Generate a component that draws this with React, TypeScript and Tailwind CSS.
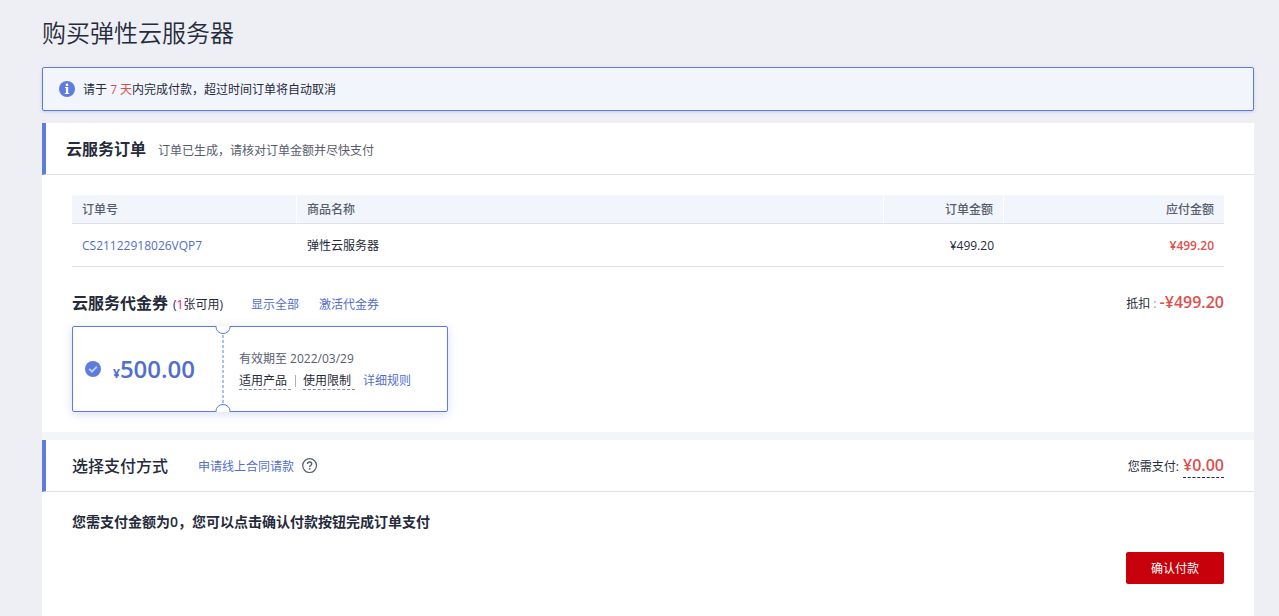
import type { ReactNode } from "react";

function InfoIcon() {
  return (
    <svg className="size-4 shrink-0" viewBox="0 0 16 16" aria-hidden="true">
      <circle cx="8" cy="8" r="8" fill="#5e7ce0" />
      <rect x="6.8" y="2.6" width="2.4" height="2.4" fill="#fff" />
      <path d="M6 6h3.2v6h1V13H5.8v-1h1.1V7H6z" fill="#fff" />
    </svg>
  );
}

function CheckIcon() {
  return (
    <svg className="size-4 shrink-0" viewBox="0 0 16 16" aria-hidden="true">
      <circle cx="8" cy="8" r="8" fill="#5e7ce0" />
      <path d="M4.2 7.8 7 10.6l4.8-4.9" fill="none" stroke="#c3d0f7" strokeWidth="1.8" />
    </svg>
  );
}

function HelpIcon() {
  return (
    <svg className="size-4" viewBox="0 0 16 16" fill="none" stroke="#575d6c" aria-hidden="true">
      <circle cx="7.6" cy="7.6" r="6.9" strokeWidth="1.2" />
      <path d="M5.5 6.1c0-1.4 1-2.1 2.1-2.1s2.1.8 2.1 2c0 1.4-2.1 1.5-2.1 3" strokeWidth="1.4" />
      <path d="M7.6 10v1.6" strokeWidth="1.5" />
    </svg>
  );
}

function Link({ children }: { children: ReactNode }) {
  return (
    <a href="#" className="text-[#526ecc] hover:underline">
      {children}
    </a>
  );
}

function Voucher() {
  return (
    <label className="relative flex h-[86px] w-[376px] cursor-pointer rounded-xs border border-[#5e7ce0] bg-white shadow-[0_2px_10px_rgba(94,124,224,0.25)]">
      <input type="checkbox" defaultChecked className="sr-only" aria-label="代金券 ¥500.00" />
      <span className="flex w-[149px] items-center pl-3 text-[#526ecc]">
        <CheckIcon />
        <span className="flex items-baseline pl-3 font-bold">
          <span className="text-xs">¥</span>
          <span className="text-2xl font-semibold">500.00</span>
        </span>
      </span>
      <span className="my-2 w-0.5 bg-[repeating-linear-gradient(to_bottom,#adc0f5_0_3px,transparent_3px_5px)]" />
      <svg className="absolute -top-px left-[142px] h-2 w-4" viewBox="0 0 16 8" aria-hidden="true">
        <path d="M1 0h14v1a7 6.5 0 0 1-14 0z" fill="#fff" />
        <path d="M1 0v1a7 6.5 0 0 0 14 0V0" fill="none" stroke="#5e7ce0" />
      </svg>
      <svg className="absolute -bottom-px left-[142px] h-2 w-4" viewBox="0 0 16 8" aria-hidden="true">
        <path d="M1 8h14V7A7 6.5 0 0 0 1 7z" fill="#fff" />
        <path d="M1 8V7a7 6.5 0 0 1 14 0v1" fill="none" stroke="#5e7ce0" />
      </svg>
      <span className="flex flex-col justify-center gap-1.5 pl-[15px] pt-0.5">
        <span className="leading-4 text-[#575d6c]">有效期至 2022/03/29</span>
        <span className="flex items-center text-[#252b3a]">
          <span className="border-b border-dashed border-[#8a8e99] pr-1 leading-4">适用产品</span>
          <span className="mx-1 h-3 border-l border-[#adb0b8]" />
          <span className="ml-[3px] mr-2 border-b border-dashed border-[#8a8e99] pr-1 leading-4">使用限制</span>
          <Link>详细规则</Link>
        </span>
      </span>
    </label>
  );
}

export default function App() {
  return (
    <div className="flex min-h-screen flex-col bg-[#eeeff5] pl-[42px] pr-[25px] font-['Open_Sans','Noto_Sans_CJK_SC',sans-serif] text-xs text-[#252b3a]">
      <h1 className="pb-[17px] pt-[15px] text-2xl font-[350] leading-[35px]">购买弹性云服务器</h1>

      <div
        role="status"
        className="flex h-11 items-center gap-2 rounded-xs border border-[#5e7ce0] bg-[#f2f5fc] px-4 shadow-[0_1px_3px_rgba(94,124,224,0.3)]"
      >
        <InfoIcon />
        <p className="pt-0.5">
          请于 <span className="text-[#de504e]">7 天</span>内完成付款，超过时间订单将自动取消
        </p>
      </div>

      <main className="mt-3 flex grow flex-col bg-white">
        <section>
          <header className="flex h-[52px] items-center gap-3 border-b border-l-4 border-b-[#dfe1e6] border-l-[#5e7ce0] pl-5">
            <h2 className="text-base font-bold">云服务订单</h2>
            <p className="pt-1 text-[#575d6c]">订单已生成，请核对订单金额并尽快支付</p>
          </header>

          <div className="px-[30px] pb-5 pt-5">
            <table className="w-full table-fixed border-separate border-spacing-0">
              <colgroup>
                <col className="w-[225px]" />
                <col />
                <col className="w-[120px]" />
                <col className="w-[220px]" />
              </colgroup>
              <thead>
                <tr className="h-[29px] bg-[#f2f5fc] text-[#575d6c] [&>th]:border-b [&>th]:border-b-[#dfe1e6] [&>th]:pt-0.5 [&>th]:font-medium">
                  <th className="border-r border-r-white px-2.5 text-left">订单号</th>
                  <th className="border-r border-r-white px-2.5 text-left">商品名称</th>
                  <th className="border-r border-r-white px-2.5 text-right">订单金额</th>
                  <th className="px-2.5 text-right">应付金额</th>
                </tr>
              </thead>
              <tbody>
                <tr className="h-[43px] [&>td]:border-b [&>td]:border-[#dfe1e6] [&>td]:pt-0.5">
                  <td className="px-2.5">
                    <Link>CS21122918026VQP7</Link>
                  </td>
                  <td className="px-2.5">弹性云服务器</td>
                  <td className="px-2.5 text-right">¥499.20</td>
                  <td className="px-2.5 text-right font-semibold text-[#de504e]">¥499.20</td>
                </tr>
              </tbody>
            </table>

            <div className="flex items-center justify-between pb-[11px] pt-6">
              <div className="flex items-baseline">
                <h3 className="text-base font-bold">云服务代金券</h3>
                <span className="pl-[5px]">
                  (<span className="text-[#f3007e]">1</span>张可用)
                </span>
                <span className="flex gap-5 pl-7">
                  <Link>显示全部</Link>
                  <Link>激活代金券</Link>
                </span>
              </div>
              <p className="leading-5">
                抵扣 <span className="text-[#8a8e99]">:</span>{" "}
                <strong className="text-base leading-5 font-semibold text-[#de504e]">-¥499.20</strong>
              </p>
            </div>

            <Voucher />
          </div>
        </section>

        <section className="border-t-8 border-[#f3f5f8]">
          <header className="flex h-[52px] items-center border-b border-l-4 border-b-[#dfe1e6] border-l-[#5e7ce0] pl-[26px] pr-[30px]">
            <h2 className="text-base font-medium">选择支付方式</h2>
            <span className="pl-[30px] pt-0.5">
              <Link>申请线上合同请款</Link>
            </span>
            <button type="button" aria-label="帮助" className="ml-2">
              <HelpIcon />
            </button>
            <p className="ml-auto flex items-baseline gap-1">
              您需支付:
              <strong className="border-b border-dashed border-[#252b3a] text-base font-semibold text-[#de504e]">
                ¥0.00
              </strong>
            </p>
          </header>

          <div className="flex flex-col px-[30px] pt-5">
            <p className="text-sm font-semibold">您需支付金额为0，您可以点击确认付款按钮完成订单支付</p>
            <button
              type="button"
              className="mt-5 h-8 self-end rounded-xs bg-[#c7000b] px-[25px] pt-0.5 text-white"
            >
              确认付款
            </button>
          </div>
        </section>
      </main>
    </div>
  );
}
